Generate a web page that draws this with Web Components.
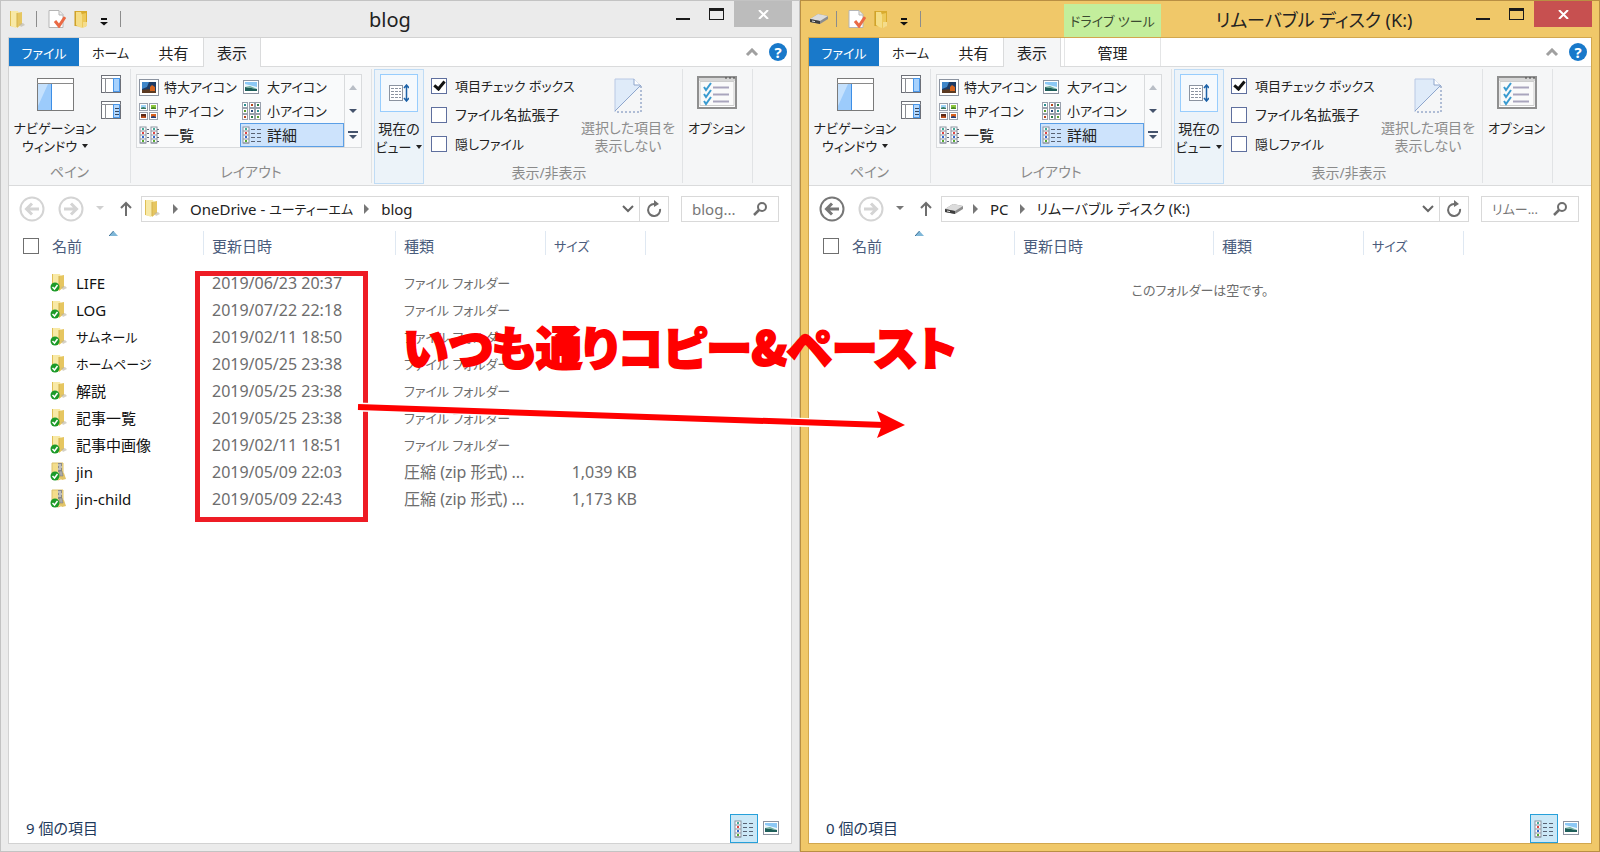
<!DOCTYPE html>
<html lang="ja">
<head>
<meta charset="utf-8">
<title>blog</title>
<style>
html, body { margin: 0; }
body {
  min-height: 100vh; display: flex; position: relative; overflow-x: hidden;
  font: 15px/18px "Noto Sans", "Noto Sans CJK JP", sans-serif;
  font-feature-settings: "palt" 1; color: #222; background: #fff;
}
explorer-window { flex: 1 1 0; min-width: 0; }
</style>
</head>
<body>
<explorer-window kind="folder" heading="blog"></explorer-window>
<explorer-window kind="drive" heading="リムーバブル ディスク (K:)" active></explorer-window>
<annotation-layer>いつも通りコピー&amp;ペースト</annotation-layer>

<script>
const folder = '<path d="M1 1h6v16l-6-1z" fill="#dfbf55"/><path d="M2 1h7l1 3v11l-3 3-5-2z" fill="#f8e9a6"/><path d="M8 3l5-1v12l-5 4z" fill="#e6c660"/><path d="M8 3v14" stroke="#d3b04a"/><path d="M10 14l4-1 2 2-4 2z" fill="#b9b3a0" opacity=".6"/>';
const folderStrong = '<path d="M1 1h12v14l-2 2-10-1z" fill="#d9ab2e"/><path d="M2 2h5l1 3v13l-3-1-3-2z" fill="#f5dd86"/><path d="M8 4l4-1v12l-4 3z" fill="#edc95a"/><path d="M9 12h4v4l-4 2z" fill="#f4dc8c"/><path d="M1 1v15" stroke="#c79a22"/>';
const photo = (x, y, w, h, a, b) => `<rect x="${x}" y="${y}" width="${w}" height="${h}" fill="${a}"/><path d="M${x} ${y + h}v-${h / 3}l${w / 2}-${h / 6} ${w / 2} ${h / 4}v${h / 4}z" fill="${b}"/>`;
const picture = (x, y, w, h) => `<rect x="${x}" y="${y}" width="${w}" height="${h}" fill="#8cc8f5"/><path d="M${x} ${y + 2}l${w} 3v2H${x}z" fill="#e9f6fd"/><path d="M${x} ${y + h}v-4l${w} 2v2z" fill="#1f5f5a"/><path d="M${x} ${y + h - 4}l5-1 ${w - 5} 3z" fill="#6fae9a"/>`;
const listCol = (x, lines) => {
  let s = `<rect x="${x}" y="1" width="6" height="16" fill="#fff" stroke="#8b93a0"/>`;
  ['#4a9', '#d44', '#36c', '#5a3'].forEach((c, i) => {
    const y = 3 + i * 4;
    s += `<rect x="${x + 2}" y="${y - 1}" width="2" height="2" fill="${c}"/><path d="M${x} ${y + 2}h6" stroke="#8b93a0"/>`;
    lines.forEach(([a, b]) => { s += `<path d="M${a} ${y}.5H${b}" stroke="#596273"/>`; });
  });
  return s;
};
const tick = '<circle cx="5" cy="14" r="4.500" fill="#1c9a28"/><path d="M2.500 14l2 2 3-4" fill="none" stroke="#fff" stroke-width="1.500"/>';
const ICONS = {
  folder: [17, 19, folder],
  folderStrong: [15, 19, folderStrong],
  folderSync: [18, 20, '<g transform="translate(1 0)">' + folder + '</g>' + tick],
  zipSync: [18, 20, '<path d="M2 1h11v15l-5 2-6-2z" fill="#f3dd8b" stroke="#dcc06a"/><path d="M11 10l3 1 2 6-4 1-3-3z" fill="#e2c468"/><path d="M8 1h4v9H8z" fill="#8a8a8a"/><path d="M8 3h3M9 5h3M8 7h3" stroke="#f2f2f2"/><path d="M9 9h3l1 5h-3z" fill="#aaa" stroke="#777" stroke-width=".5"/>' + tick],
  drive: [20, 12, '<path d="M1 6l8-5 10 2v3l-8 5-10-2z" fill="#8d8d8d"/><path d="M1 6l8-5 10 2-8 5z" fill="#dcdcdc"/><path d="M1 6l10 2v3L1 9z" fill="#3f3f3f"/><path d="M3 8l3 .6" stroke="#ddd"/>'],
  check: [18, 18, '<path d="M1 .5h10l4 4v13H1z" fill="#fff" stroke="#b5b5b5"/><path d="M11 1v4h4" fill="#eee" stroke="#b5b5b5"/><path d="M7 11l4 5 6-9" fill="none" stroke="#ea6a45" stroke-width="3"/>'],
  menu: [8, 8, '<path d="M1 1h6" stroke="#111" stroke-width="2"/><path d="M0 4h8L4 7.500z" fill="#111"/>'],
  caret: [7, 4, '<path d="M1 0h6L4 4z" fill="currentColor"/>'],
  bigCaret: [8, 5, '<path d="M0 0h8L4 4z" fill="currentColor"/>'],
  up: [8, 5, '<path d="M0 5h8L4 0z" fill="#b9bec6"/>'],
  more: [10, 9, '<path d="M0 1h10" stroke="#45536c" stroke-width="2"/><path d="M1 4h8L5 8z" fill="#45536c"/>'],
  min: [14, 14, '<path d="M0 13h14" stroke="#1a1a1a" stroke-width="2"/>'],
  max: [15, 12, '<rect x=".5" y=".5" width="14" height="11" fill="none" stroke="#1a1a1a"/><path d="M0 1.500h15" stroke="#1a1a1a" stroke-width="3"/>'],
  close: [11, 9, '<path d="M1 0l9 9M10 0L1 9" stroke="#fff" stroke-width="2"/>'],
  chevUp: [14, 9, '<path d="M2 7l5-5 5 5" fill="none" stroke="#a0a0a0" stroke-width="3"/>'],
  chevDown: [12, 8, '<path d="M1 1l5 5 5-5" fill="none" stroke="#666" stroke-width="2"/>'],
  right: [6, 10, '<path d="M0 0v10l5-5z" fill="#777"/>'],
  sort: [9, 5, '<path d="M0 5h9L4.500 0z" fill="#7fb7d8"/><path d="M0 5L4.500 0" stroke="#3a6f96"/>'],
  back: [26, 26, '<circle cx="13" cy="13" r="11.500" fill="none" stroke="currentColor" stroke-width="2"/><path d="M20 13H8M13 7.500L7.500 13l5.500 5.500" fill="none" stroke="currentColor" stroke-width="3"/>'],
  forward: [26, 26, '<circle cx="13" cy="13" r="11.500" fill="none" stroke="currentColor" stroke-width="2"/><path d="M6 13h12M13 7.500l5.500 5.500-5.500 5.500" fill="none" stroke="currentColor" stroke-width="3"/>'],
  upArrow: [12, 15, '<path d="M6 15V2M1 7l5-5 5 5" fill="none" stroke="#6e6e6e" stroke-width="2"/>'],
  refresh: [16, 17, '<path d="M8 4a6 6 0 1 0 6 5" fill="none" stroke="#6e6e6e" stroke-width="2"/><path d="M8 0v7l5-3z" fill="#6e6e6e"/>'],
  search: [14, 14, '<circle cx="9" cy="5" r="4" fill="none" stroke="#6e6e6e" stroke-width="2"/><path d="M6 8l-5 5" stroke="#6e6e6e" stroke-width="2.500"/>'],
  navPane: [37, 33, '<rect x=".5" y=".5" width="36" height="32" fill="#fff" stroke="#7a7a7a"/><path d="M0 5.500h37" stroke="#8a8a8a"/><rect x="1" y="6" width="13" height="26" fill="#9ccbfb"/><path d="M1 6h10L1 28z" fill="#c5e1fd"/><path d="M14.500 6v26" stroke="#3c8ee6"/>'],
  preview: [20, 18, '<rect x=".5" y=".5" width="19" height="17" fill="#fff" stroke="#6d7078"/><path d="M0 3.500h20M4.500 4v14" stroke="#8a8d93"/><rect x="12.500" y="3.500" width="6" height="13" fill="#a6d1fd" stroke="#4a96e8"/>'],
  details: [20, 18, '<rect x=".5" y=".5" width="19" height="17" fill="#fff" stroke="#6d7078"/><path d="M0 3.500h20M4.500 4v14" stroke="#8a8d93"/><rect x="12.500" y="3.500" width="6" height="13" fill="#b5d8fd" stroke="#4a96e8"/><path d="M14 7.500h4M14 10.500h4M14 13.500h4" stroke="#34465e"/>'],
  xlarge: [20, 17, '<rect x=".5" y=".5" width="19" height="16" fill="#fff" stroke="#8b93a0"/><rect x="3" y="3" width="14" height="11" fill="#1e3c66"/><path d="M3 3h7l-2 5-5 2z" fill="#3f86c8"/><path d="M3 14v-3l7-1 7 2v2z" fill="#5b3a22"/><path d="M11 12V8l2-2 3 2v4z" fill="#d5641f"/>'],
  large: [18, 16, '<rect x="1.500" y="1.500" width="15" height="13" fill="#fff" stroke="#8b93a0"/>' + picture(3, 3, 12, 9)],
  medium: [19, 17, '<rect x=".5" y=".5" width="8" height="7" fill="#fff" stroke="#9aa1ad"/><rect x="10.500" y=".5" width="8" height="7" fill="#fff" stroke="#9aa1ad"/><rect x=".5" y="9.500" width="8" height="7" fill="#fff" stroke="#9aa1ad"/><rect x="10.500" y="9.500" width="8" height="7" fill="#fff" stroke="#9aa1ad"/>' + photo(2, 2, 5, 4, '#9fd3f7', '#3c7d63') + photo(12, 2, 5, 4, '#8cc63f', '#4a8a22') + photo(2, 11, 5, 4, '#5b2a18', '#c2501f') + photo(12, 11, 5, 4, '#d9601c', '#24407a')],
  small: [19, 18, [0, 7, 13].map((x, i) => [0, 6, 12].map((y, j) => `<rect x="${x}.5" y="${y}.5" width="5" height="5" fill="#fff" stroke="#9aa1ad"/><rect x="${x + 2}" y="${y + 2}" width="2" height="2" fill="${['#2a8f8f', '#5a9e2f', '#b5461e', '#2c4f80', '#2a7a4a'][(i * 2 + j) % 5]}"/>`).join('')).join('')],
  list: [20, 18, listCol(1, [[8, 10]]) + listCol(12, [[18, 20]])],
  detail: [20, 18, listCol(1, [[9, 13], [15, 19]])],
  sortView: [20, 18, '<rect x=".5" y="1.500" width="13" height="15" fill="#fff" stroke="#8b93a0"/><path d="M2 4.500h3M6 4.500h3M10 4.500h2M2 7.500h3M6 7.500h3M10 7.500h2M2 10.500h3M6 10.500h3M10 10.500h2M2 13.500h3M6 13.500h3M10 13.500h2" stroke="#8b93a0"/><path d="M17.500 2v14M15 4l2.500-3L20 4M15 14l2.500 3 2.500-3" fill="none" stroke="#1d62a8" stroke-width="1.500"/>'],
  hide: [28, 35, '<path d="M1 1h19l7 7L1 33z" fill="#dfebf9"/><path d="M1 34V1h19l6 6" fill="none" stroke="#b9c9e4"/><path d="M20 1v6h6" fill="#fff" stroke="#8fa6cc"/><path d="M1 33L27 7" stroke="#8fa6cc"/><path d="M27 8v26H1" fill="none" stroke="#6b84b4" stroke-dasharray="2 2"/>'],
  options: [40, 33, '<rect x="1" y="1" width="38" height="31" fill="#fff" stroke="#8f8f8f" stroke-width="2"/><rect x="2" y="2" width="36" height="3" fill="#d6d6d6"/><path d="M28 2h2M32 2h2M36 2h2" stroke="#444"/><path d="M3 5.500h34v24H3z" fill="#fafafa" stroke="#ccc"/><path d="M16 11.500h16M16 18.500h16M16 25.500h16" stroke="#a9a5bd" stroke-width="2"/><path d="M7 11l2 3 5-7M7 18l2 3 5-7M7 25l2 3 5-7" fill="none" stroke="#3a9bd0" stroke-width="2"/>']
};

function define(name, render) {
  customElements.define(name, class extends HTMLElement {
    connectedCallback() {
      if (this.shadowRoot) return;
      this.attachShadow({ mode: 'open' }).innerHTML = render(this);
    }
  });
}
const BASE = `*{box-sizing:border-box}button,input{font:inherit;font-feature-settings:inherit;color:inherit;background:none;border:0;padding:0;margin:0}button{white-space:nowrap}.kana{font-size:13px}`;

define('ui-icon', el => {
  const [w, h, body] = ICONS[el.getAttribute('name')];
  return `<style>:host{display:inline-flex;flex:none}svg{display:block}</style><svg width="${w}" height="${h}" viewBox="0 0 ${w} ${h}" aria-hidden="true">${body}</svg>`;
});

define('explorer-window', el => {
  const kind = el.getAttribute('kind');
  return `<style>${BASE}
  :host{display:flex;flex-direction:column;box-sizing:border-box;border:1px solid #c3c3c3;padding:0 7px 7px;background:#ebebeb;--edge:#d2d2d2;--close:#bcbcbc}
  :host([active]){border-color:#b98f43;background:#f0c869;--edge:#d2a74e;--close:#c75050}
  main{flex:1;display:flex;flex-direction:column;background:#fff;border:1px solid var(--edge)}
  file-list{flex:1}
  </style>
  <title-bar kind="${kind}">${el.getAttribute('heading')}</title-bar>
  <main><ribbon-tabs kind="${kind}"></ribbon-tabs><ribbon-bar></ribbon-bar><address-bar kind="${kind}"></address-bar><file-list kind="${kind}"></file-list><status-bar>${kind === 'folder' ? 9 : 0} 個の項目</status-bar></main>`;
});

define('title-bar', el => {
  const drive = el.getAttribute('kind') === 'drive';
  return `<style>${BASE}
  :host{display:flex;height:36px}
  .quick{display:flex;align-items:center;width:${drive ? 256 : 105}px;padding-left:1px;flex:none}
  .quick>*{flex:none}
  .app{width:20px;display:flex}
  i{width:1px;height:16px;background:#8c8c8c;margin:0 11px 0 7px}
  .q{display:flex;margin-right:8px}.m{margin:2px 0 0 3px}
  i.end{margin:0 0 0 12px}
  .ctx{flex:none;width:97px;height:33px;margin-top:3px;background:#c3ee9c;text-align:center;line-height:34px;font-size:13px;white-space:nowrap;color:#3b4a30}
  h1{flex:1;margin:0;font:inherit;font-size:${drive ? 18 : 20}px;line-height:38px;text-align:center;white-space:nowrap}
  .ctl{display:flex;flex:none;align-items:flex-start;width:125px}
  .ctl button{display:flex}
  .min{margin:5px 0 0 9px}.max{margin:7px 0 0 19px}
  .ctl .close{margin-left:auto;width:58px;height:26px;background:var(--close);align-items:center;justify-content:center}
  </style>
  <div class="quick"><span class="app"><ui-icon name="${drive ? 'drive' : 'folder'}"></ui-icon></span><i></i><button class="q" aria-label="プロパティ"><ui-icon name="check"></ui-icon></button><button class="q" aria-label="新しいフォルダー"><ui-icon name="folderStrong"></ui-icon></button><button class="m" aria-label="カスタマイズ"><ui-icon name="menu"></ui-icon></button><i class="end"></i></div>
  ${drive ? '<div class="ctx">ドライブ ツール</div>' : ''}
  <h1><slot></slot></h1>
  <div class="ctl"><button class="min" aria-label="最小化"><ui-icon name="min"></ui-icon></button><button class="max" aria-label="最大化"><ui-icon name="max"></ui-icon></button><button class="close" aria-label="閉じる"><ui-icon name="close"></ui-icon></button></div>`;
});

define('ribbon-tabs', el => `<style>${BASE}
  :host{display:flex;height:29px;border-bottom:1px solid #dadbdc;background:#fff}
  button{height:28px;line-height:30px;width:63px}
  .file{width:70px;background:#1979ca;color:#fff}
  .on{width:58px;height:29px;margin:0 3px 0 -2px;background:#f5f6f7;border:1px solid #dadbdc;border-width:0 1px}
  .ctx{width:97px;border:1px solid #e4e5e6;border-width:0 1px}
  .end{margin-left:auto;display:flex;align-items:center;gap:10px;padding-right:4px}
  .end button{width:auto;height:auto;display:flex}
  .end .help{width:18px;height:18px;border-radius:50%;background:#1979ca;color:#fff;font-weight:700;line-height:18px;justify-content:center}
  </style><button class="file kana">ファイル</button><button class="kana">ホーム</button><button>共有</button><button class="on">表示</button>${el.getAttribute('kind') === 'drive' ? '<button class="ctx">管理</button>' : ''}<div class="end"><button aria-label="リボンの最小化"><ui-icon name="chevUp"></ui-icon></button><button class="help">?</button></div>`);

define('ribbon-group', el => `<style>
  :host{display:flex;flex-direction:column;box-sizing:border-box;flex:none;border-right:1px solid #e1e3e5;margin:2px 0}
  .body{flex:1;display:flex;align-items:flex-start}
  .label{height:22px;line-height:22px;text-align:center;color:#8a8a8a;font-size:14px;padding-left:var(--lead,0)}
  </style><div class="body"><slot></slot></div><div class="label">${el.getAttribute('label') || ''}</div>`);

define('ribbon-bar', () => `<style>${BASE}
  :host{display:flex;height:119px;background:#f5f6f7;border-bottom:1px solid #dadbdc}
  .big{display:flex;flex-direction:column;align-items:center;line-height:18px;font-size:14px}
  .big .kana{font-size:13px}
  .g1{width:122px}.nav{width:92px;padding-top:9px}.nav ui-icon{margin-bottom:8px}
  .l2{display:flex;align-items:center;gap:4px}.l2 ui-icon,.nav .l2 ui-icon{margin:0}
  .small{display:flex;flex-direction:column;gap:8px;padding-top:6px}.small button{display:flex}
  .g2{width:241px}
  .gallery{display:flex;margin:5px 0 0 5px;width:226px;height:74px;border:1px solid #d9dbdd;background:#f9fafb}
  .items{flex:1;display:grid;grid-template-columns:103px 104px;grid-auto-rows:24px}
  .items button{display:flex;align-items:center;gap:5px;padding-left:2px}
  .items .sel{background:#cde3fc;border:1px solid #5b9fe6;padding-left:1px}
  .items ui-icon{width:20px}
  .scroll{width:17px;border-left:1px solid #d9dbdd;display:grid;grid-auto-rows:24px;color:#45536c}
  .scroll button{display:flex;align-items:center;justify-content:center}
  .g3{width:311px;--lead:44px}
  .cur{width:50px;height:115px;margin-left:2px;padding-top:4px;border:1px solid #c0dcf5;background:#ecf3f9}
  .frame{width:38px;height:38px;border:1px solid #98cdfd;background:#f5f9fd;display:flex;align-items:center;justify-content:center;margin-bottom:8px}
  .wrap{margin-bottom:-22px}
  .checks{margin:8px 0 0 7px;display:flex;flex-direction:column;gap:11px;width:148px}
  label{display:flex;align-items:center;gap:8px;height:18px;font-size:14px;white-space:nowrap}
  label.kana{font-size:13px}
  input{appearance:none;width:16px;height:16px;border:1px solid #5f6f9e;background:#fff;flex:none;display:grid;place-items:center}
  input:checked::after{content:"";width:4px;height:8px;border:solid #111;border-width:0 3px 3px 0;transform:rotate(40deg);margin-top:-3px}
  .hide{width:98px;color:#8d8d8d;padding-top:9px}.hide ui-icon{margin-bottom:6px}
  .g4{width:70px}.opt{width:67px;padding-top:7px}.opt ui-icon{margin-bottom:10px}
  </style>
  <ribbon-group class="g1" label="ペイン"><button class="big nav"><ui-icon name="navPane"></ui-icon><span class="kana">ナビゲーション</span><span class="l2 kana">ウィンドウ <ui-icon name="caret"></ui-icon></span></button><div class="small"><button aria-label="プレビュー ウィンドウ"><ui-icon name="preview"></ui-icon></button><button aria-label="詳細ウィンドウ"><ui-icon name="details"></ui-icon></button></div></ribbon-group>
  <ribbon-group class="g2" label="レイアウト"><div class="gallery"><div class="items">
   <button class="kana"><ui-icon name="xlarge"></ui-icon>特大アイコン</button><button class="kana"><ui-icon name="large"></ui-icon>大アイコン</button>
   <button class="kana"><ui-icon name="medium"></ui-icon>中アイコン</button><button class="kana"><ui-icon name="small"></ui-icon>小アイコン</button>
   <button><ui-icon name="list"></ui-icon>一覧</button><button class="sel"><ui-icon name="detail"></ui-icon>詳細</button></div>
   <div class="scroll"><button aria-label="上"><ui-icon name="up"></ui-icon></button><button aria-label="下"><ui-icon name="bigCaret"></ui-icon></button><button aria-label="その他"><ui-icon name="more"></ui-icon></button></div></div></ribbon-group>
  <ribbon-group class="g3" label="表示/非表示"><div class="wrap"><button class="big cur"><span class="frame"><ui-icon name="sortView"></ui-icon></span><span>現在の</span><span class="l2 kana">ビュー <ui-icon name="caret"></ui-icon></span></button></div>
   <div class="checks"><label class="kana"><input type="checkbox" checked>項目チェック ボックス</label><label><input type="checkbox">ファイル名拡張子</label><label class="kana"><input type="checkbox">隠しファイル</label></div>
   <button class="big hide"><ui-icon name="hide"></ui-icon><span>選択した項目を</span><span>表示しない</span></button></ribbon-group>
  <ribbon-group class="g4"><button class="big opt"><ui-icon name="options"></ui-icon><span class="kana">オプション</span></button></ribbon-group>`);

define('address-bar', el => {
  const drive = el.getAttribute('kind') === 'drive';
  const crumbs = drive ? ['PC', '<span class="mid">リムーバブル ディスク (K:)</span>'] : ['OneDrive -&nbsp;<span class="kana">ユーティーエム</span>', 'blog'];
  return `<style>${BASE}
  :host{display:flex;align-items:center;height:45px;padding:0 12px 0 10px;color:#222}
  button{display:flex;align-items:center;flex:none}
  .mid{font-size:14px}
  .round{color:#d4d4d4;margin-right:13px}.back{color:${drive ? '#777' : '#d4d4d4'}}
  .forward{margin-right:12px}
  .hist{color:${drive ? '#777' : '#d0d0d0'}}
  .up{margin:0 9px 0 16px}
  .addr{flex:1;display:flex;align-items:center;height:26px;border:1px solid #d9d9d9;min-width:0;padding-left:2px}
  .addr>ui-icon{width:20px;margin-right:9px}
  nav{display:flex;align-items:center;flex:1;gap:11px}
  .down{width:22px;justify-content:center}
  .ref{width:29px;height:24px;justify-content:center;border-left:1px solid #d9d9d9}
  .search{display:flex;align-items:center;width:98px;height:26px;border:1px solid #d9d9d9;margin-left:12px;padding:0 11px 0 10px}
  input{flex:1;min-width:0;width:0;height:24px;outline:0;font-size:${drive ? 13 : 15}px}input::placeholder{color:#777;opacity:1}
  </style>
  <button class="round back" aria-label="戻る"><ui-icon name="back"></ui-icon></button><button class="round forward" aria-label="進む"><ui-icon name="forward"></ui-icon></button><button class="hist" aria-label="履歴"><ui-icon name="bigCaret"></ui-icon></button><button class="up" aria-label="上へ"><ui-icon name="upArrow"></ui-icon></button>
  <div class="addr"><ui-icon name="${drive ? 'drive' : 'folder'}"></ui-icon><nav>${crumbs.map(c => `<ui-icon name="right"></ui-icon><button>${c}</button>`).join('')}</nav><button class="down" aria-label="候補"><ui-icon name="chevDown"></ui-icon></button><button class="ref" aria-label="最新の情報に更新"><ui-icon name="refresh"></ui-icon></button></div>
  <div class="search"><input type="text" aria-label="検索" placeholder="${drive ? 'リムー...' : 'blog...'}"><ui-icon name="search"></ui-icon></div>`;
});

const FILES = [
  ['LIFE', '2019/06/23 20:37'], ['LOG', '2019/07/22 22:18'], ['サムネール', '2019/02/11 18:50'],
  ['ホームページ', '2019/05/25 23:38'], ['解説', '2019/05/25 23:38'], ['記事一覧', '2019/05/25 23:38'],
  ['記事中画像', '2019/02/11 18:51'], ['jin', '2019/05/09 22:03', '1,039 KB'], ['jin-child', '2019/05/09 22:43', '1,173 KB']
];
const isKana = s => /^[\u30a0-\u30ff]+$/.test(s);
define('file-list', el => {
  const drive = el.getAttribute('kind') === 'drive';
  return `<style>${BASE}
  :host{display:block}
  table{border-collapse:collapse;table-layout:fixed;width:${drive ? 655 : 637}px}
  .n{width:${drive ? 206 : 195}px}.d{width:${drive ? 199 : 192}px}.t{width:150px}.s{width:100px}
  th{padding:0 0 8px;font-weight:400;text-align:left;color:#4a5c7c;position:relative}
  th>span{display:flex;align-items:center;height:30px;padding-left:8px;background:linear-gradient(#dfe8f2,#dfe8f2) right top/1px 24px no-repeat;white-space:nowrap}
  th:first-child>span{padding-left:14px;gap:13px}
  th ui-icon{position:absolute;left:${drive ? 106 : 100}px;top:0}
  input{appearance:none;width:16px;height:16px;border:1px solid #6f6f6f}
  td{height:27px;padding:0 0 0 8px;color:#6d6d6d;white-space:nowrap;font-size:16px}
  td:first-child{padding-left:41px;color:#111;font-size:15px}
  td:last-child{text-align:right;padding-right:9px}
  .f{display:flex;align-items:center;gap:8px}
  p{margin:12px 0 0;text-align:center;color:#6d6d6d}
  </style><table><colgroup><col class="n"><col class="d"><col class="t"><col class="s"></colgroup><thead><tr><th><span><input type="checkbox" aria-label="すべて選択">名前</span><ui-icon name="sort"></ui-icon></th><th><span>更新日時</span></th><th><span>種類</span></th><th><span class="kana">サイズ</span></th></tr></thead><tbody>
  ${drive ? '' : FILES.map(([n, d, s]) => `<tr><td><span class="f${isKana(n) ? ' kana' : ''}"><ui-icon name="${s ? 'zipSync' : 'folderSync'}"></ui-icon>${n}</span></td><td>${d}</td>${s ? '<td>圧縮 (zip 形式) ...</td>' : '<td class="kana">ファイル フォルダー</td>'}<td>${s || ''}</td></tr>`).join('')}
  </tbody></table>${drive ? '<p class="kana">このフォルダーは空です。</p>' : ''}
  <style>td.kana{font-size:13px}</style>`;
});

define('status-bar', () => `<style>${BASE}
  :host{display:flex;height:29px;padding:0 11px 0 17px;color:#1e395b}
  span{flex:1;line-height:29px}
  button{display:flex;align-items:center;justify-content:center}
  .on{width:28px;height:29px;background:#cbe8f7;border:1px solid #26a0da;margin-right:4px}
  .ic{height:28px}
  </style><span><slot></slot></span><button class="on" aria-label="詳細表示"><ui-icon name="detail"></ui-icon></button><button class="ic" aria-label="大アイコン表示"><ui-icon name="large"></ui-icon></button>`);

define('annotation-layer', () => `<style>
  :host{position:absolute;inset:0;pointer-events:none;color:#f00}
  .box{position:absolute;left:195px;top:271px;width:173px;height:251px;box-sizing:border-box;border:5px solid #ee1c25}
  strong{position:absolute;left:403px;top:315px;font-size:46px;line-height:60px;font-weight:900;white-space:nowrap;font-family:"Noto Sans CJK JP",sans-serif;-webkit-text-stroke:2px #f00}
  svg{position:absolute;left:350px;top:400px}
  </style><div class="box"></div>
  <svg width="570" height="50" viewBox="0 0 570 50" aria-hidden="true"><path d="M8 7l522 18" stroke="#fff" stroke-width="9"/><path d="M8 7l526 18" stroke="#f00" stroke-width="6"/><path d="M527 11l28 14-28 13 5-13z" fill="#f00"/></svg><strong><slot></slot></strong>`);
</script>
</body>
</html>
